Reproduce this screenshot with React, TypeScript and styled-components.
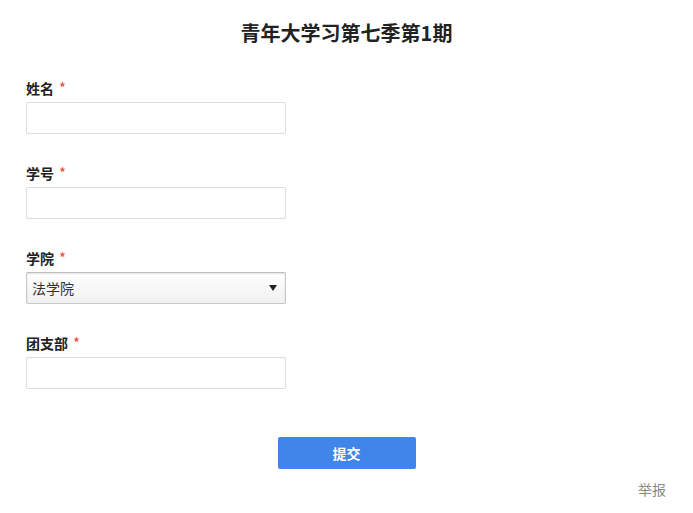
import React from "react";
import styled, { createGlobalStyle } from "styled-components";

const Global = createGlobalStyle`
  html, body { margin: 0; padding: 0; background: #fff; }
  body { font-family: "Noto Sans CJK SC", "Noto Sans", sans-serif; color: #222; }
`;

const Page = styled.div`
  width: 693px;
  height: 513px;
  box-sizing: border-box;
  padding: 19px 26px 0;
  display: flex;
  flex-direction: column;
`;

const Title = styled.h1`
  margin: 0;
  font-size: 20px;
  font-weight: 700;
  line-height: 28px;
  text-align: center;
  color: #222;
`;

const Form = styled.form`
  margin-top: 31px;
  display: flex;
  flex-direction: column;
  gap: 29px;
`;

const Field = styled.div`
  display: flex;
  flex-direction: column;
  gap: 4px;
`;

const Label = styled.label`
  font-size: 14px;
  font-weight: 700;
  line-height: 20px;
  color: #222;
`;

const Star = styled.span`
  color: #e9493f;
  margin-left: 5px;
  font-weight: 400;
  font-size: 15px;
`;

const Input = styled.input`
  width: 260px;
  height: 32px;
  box-sizing: border-box;
  border: 1px solid #dcdcdc;
  border-radius: 2px;
  padding: 0 6px;
  font-size: 14px;
  outline: none;
`;

const SelectBox = styled.div`
  width: 260px;
  height: 32px;
  box-sizing: border-box;
  border: 1px solid #c8c8c8;
  border-top-color: #bdbdbd;
  border-radius: 2px;
  background: linear-gradient(#ffffff, #f1f1f1);
  box-shadow: inset 0 1px 2px rgba(0,0,0,0.12);
  display: flex;
  align-items: center;
  justify-content: space-between;
  padding: 0 8px 0 5px;
  font-size: 14px;
  color: #333;
`;

const Arrow = styled.span`
  width: 0;
  height: 0;
  border-left: 4.5px solid transparent;
  border-right: 4.5px solid transparent;
  border-top: 6px solid #222;
`;

const ButtonRow = styled.div`
  display: flex;
  justify-content: center;
  margin-top: 48px;
`;

const Submit = styled.button`
  width: 138px;
  height: 32px;
  border: none;
  border-radius: 2px;
  background: #4285e9;
  color: #fff;
  font-family: inherit;
  font-size: 14px;
  font-weight: 700;
  cursor: pointer;
`;

const Report = styled.a`
  align-self: flex-end;
  margin-top: 10px;
  margin-right: 1px;
  font-size: 14px;
  color: #888;
  text-decoration: none;
  line-height: 20px;
`;

const fields = ["姓名", "学号"];

export default function App() {
  return (
    <>
      <Global />
      <Page>
        <Title>青年大学习第七季第1期</Title>
        <Form onSubmit={(e) => e.preventDefault()}>
          {fields.map((f) => (
            <Field key={f}>
              <Label>
                {f}
                <Star>*</Star>
              </Label>
              <Input />
            </Field>
          ))}
          <Field>
            <Label>
              学院<Star>*</Star>
            </Label>
            <SelectBox>
              <span>法学院</span>
              <Arrow />
            </SelectBox>
          </Field>
          <Field>
            <Label>
              团支部<Star>*</Star>
            </Label>
            <Input />
          </Field>
        </Form>
        <ButtonRow>
          <Submit type="button">提交</Submit>
        </ButtonRow>
        <Report>举报</Report>
      </Page>
    </>
  );
}
